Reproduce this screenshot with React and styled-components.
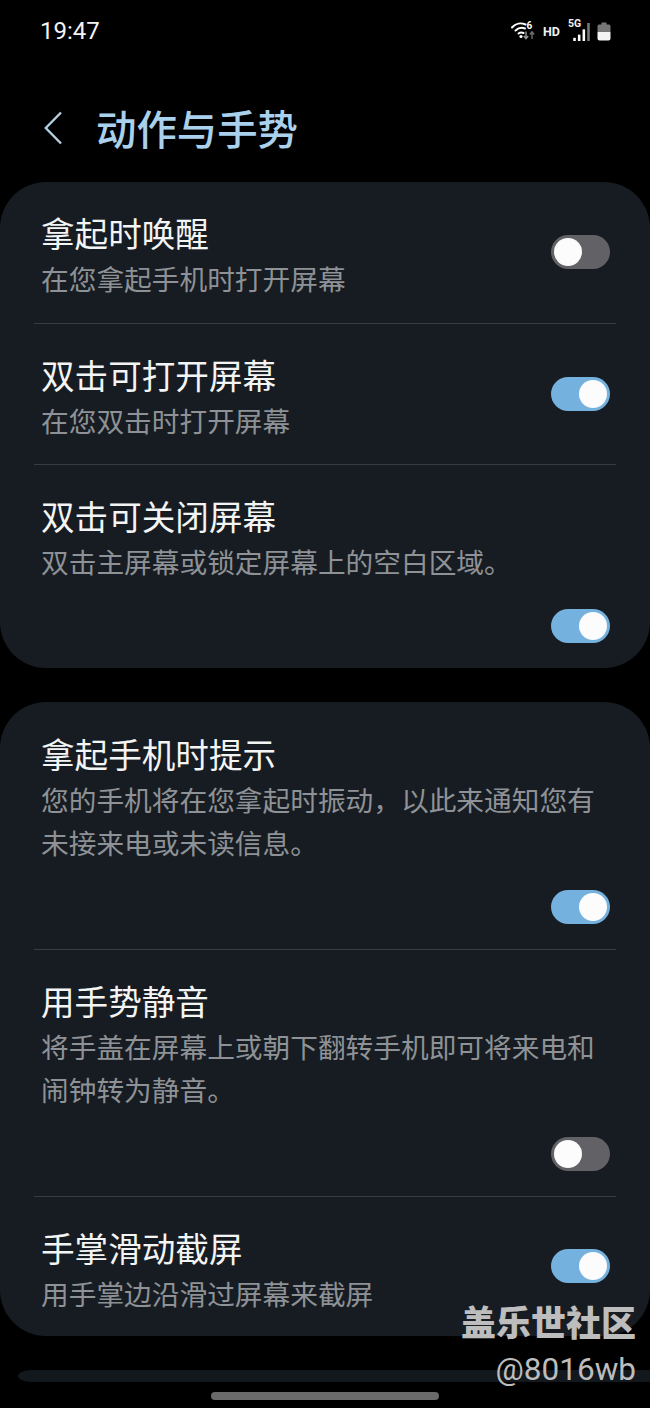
import React from "react";
import styled, { createGlobalStyle } from "styled-components";

const cjk = `"Noto Sans CJK SC", "Noto Sans", sans-serif`;

const GlobalStyle = createGlobalStyle`
	html, body {
		margin: 0;
		padding: 0;
		background: #000;
	}
	body {
		font-family: ${cjk};
	}
`;

const firstCard = [
	{ title: "拿起时唤醒", sub: ["在您拿起手机时打开屏幕"], on: false },
	{ title: "双击可打开屏幕", sub: ["在您双击时打开屏幕"], on: true },
	{ title: "双击可关闭屏幕", sub: ["双击主屏幕或锁定屏幕上的空白区域。"], on: true, stacked: true },
];

const secondCard = [
	{
		title: "拿起手机时提示",
		sub: ["您的手机将在您拿起时振动，以此来通知您有", "未接来电或未读信息。"],
		on: true,
		stacked: true,
	},
	{
		title: "用手势静音",
		sub: ["将手盖在屏幕上或朝下翻转手机即可将来电和", "闹钟转为静音。"],
		on: false,
		stacked: true,
	},
	{ title: "手掌滑动截屏", sub: ["用手掌边沿滑过屏幕来截屏"], on: true, last: true },
];

function StatusIcons() {
	return (
		<StatusRight>
			<svg width="24" height="22" viewBox="0 0 24 22">
				<g fill="none" stroke="#fff" strokeWidth="2" strokeLinecap="round">
					<path d="M1 7.5C4.5 3.5 10 2.5 14.5 4.5" />
					<path d="M4.5 10.5C7.5 7.8 11 7.3 14 8.5" />
					<path d="M7.5 13.5C9 12.3 11 12.2 12.5 13" />
				</g>
				<circle cx="10" cy="16.5" r="1.6" fill="#fff" />
				<text x="15.5" y="9" fontSize="10" fontWeight="700" fill="#fff" fontFamily="Roboto, sans-serif">6</text>
				<path d="M15 11.5v7M12.8 16l2.2 2.7 2.2-2.7" stroke="#9a9a9a" strokeWidth="1.4" fill="none" />
				<path d="M21 19v-7M18.8 14.5l2.2-2.7 2.2 2.7" stroke="#6e6e6e" strokeWidth="1.4" fill="none" />
			</svg>
			<HdLabel>HD</HdLabel>
			<SignalBox>
				<FiveG>5G</FiveG>
				<svg width="17" height="18" viewBox="0 0 15.6 17">
					<rect x="0" y="14" width="2.4" height="3" fill="#fff" />
					<rect x="4.4" y="11" width="2.4" height="6" fill="#fff" />
					<rect x="8.8" y="6" width="2.4" height="11" fill="#fff" />
					<rect x="13.2" y="0" width="2.4" height="17" fill="#7a7a7a" />
				</svg>
			</SignalBox>
			<svg width="14" height="19" viewBox="0 0 14 19">
				<path d="M4.5 0.5h5v2h2.5a1.5 1.5 0 0 1 1.5 1.5v6H.5V4A1.5 1.5 0 0 1 2 2.5h2.5z" fill="#777" />
				<path d="M.5 10h13v6.5a2 2 0 0 1-2 2h-9a2 2 0 0 1-2-2z" fill="#f4f4f4" />
			</svg>
		</StatusRight>
	);
}

function SettingRow({ title, sub, on, stacked, last }) {
	return (
		<Row stacked={stacked}>
			<RowText stacked={stacked} last={last}>
				<RowTitle>{title}</RowTitle>
				{sub.map((line) => (
					<RowSub key={line}>{line}</RowSub>
				))}
			</RowText>
			<Toggle on={on} stacked={stacked}>
				<Knob on={on} />
			</Toggle>
		</Row>
	);
}

function SettingCard({ items, offset }) {
	return (
		<Card offset={offset}>
			{items.map((item, i) => (
				<React.Fragment key={item.title}>
					{i > 0 && <Divider />}
					<SettingRow {...item} />
				</React.Fragment>
			))}
		</Card>
	);
}

export default function App() {
	return (
		<Page>
			<GlobalStyle />
			<StatusBar>
				<Clock>19:47</Clock>
				<StatusIcons />
			</StatusBar>
			<Header>
				<svg width="18" height="34" viewBox="0 0 18 34">
					<path d="M17 1.5 1.8 17 17 32.5" fill="none" stroke="#b4cfe2" strokeWidth="2.4" />
				</svg>
				<Heading>动作与手势</Heading>
			</Header>
			<SettingCard items={firstCard} />
			<SettingCard items={secondCard} offset={1} />
			<PeekCard />
			<HomeBar />
			<Watermark>
				<WatermarkName>盖乐世社区</WatermarkName>
				<WatermarkUser>@8016wb</WatermarkUser>
			</Watermark>
		</Page>
	);
}

const Page = styled.div`
	position: relative;
	width: 650px;
	height: 1408px;
	overflow: hidden;
	background: #000;
	color: #fff;
`;

const StatusBar = styled.div`
	display: flex;
	align-items: center;
	justify-content: space-between;
	height: 62px;
	padding: 0 39px 0 40px;
`;

const Clock = styled.div`
	font-family: Roboto, sans-serif;
	font-size: 24px;
	color: #f4f4f4;
`;

const StatusRight = styled.div`
	display: flex;
	align-items: center;
	gap: 8px;
`;

const HdLabel = styled.div`
	font-family: Roboto, sans-serif;
	font-size: 12.5px;
	font-weight: 700;
	color: #f0f0f0;
`;

const SignalBox = styled.div`
	position: relative;
	display: flex;
	margin-right: -1px;
	padding: 2px 0 0 5px;
`;

const FiveG = styled.div`
	position: absolute;
	top: -4px;
	left: 0;
	font-family: Roboto, sans-serif;
	font-size: 10.5px;
	font-weight: 700;
	color: #f0f0f0;
`;

const Header = styled.div`
	display: flex;
	align-items: center;
	gap: 34px;
	height: 120px;
	padding-left: 44px;
	padding-top: 12px;
	box-sizing: border-box;
`;

const Heading = styled.h1`
	margin: 0;
	font-size: 40.4px;
	font-weight: 500;
	line-height: 50px;
	color: #a9d0ec;
`;

const Card = styled.div`
	margin-bottom: 34px;
	padding-top: ${(props) => props.offset || 0}px;
	border-radius: 46px;
	background: #171c22;
`;

const Divider = styled.div`
	height: 1px;
	margin: 0 34px;
	background: #383d43;
`;

const Row = styled.div`
	display: flex;
	flex-direction: ${(props) => (props.stacked ? "column" : "row")};
	align-items: ${(props) => (props.stacked ? "flex-end" : "center")};
	justify-content: space-between;
	padding: ${(props) => (props.stacked ? "0 40px 25px 41px" : "0 40px 0 41px")};
`;

const RowText = styled.div`
	align-self: stretch;
	padding: 29px 0 ${(props) => (props.stacked ? "0" : props.last ? "20.5px" : "22.5px")};
`;

const RowTitle = styled.div`
	margin-bottom: 2px;
	font-size: 33.6px;
	line-height: 44px;
	color: #f3f4f4;
`;

const RowSub = styled.div`
	font-size: 27.7px;
	line-height: 43px;
	color: #8e9296;
	white-space: nowrap;
`;

const Toggle = styled.div`
	display: flex;
	align-items: center;
	flex: none;
	justify-content: ${(props) => (props.on ? "flex-end" : "flex-start")};
	box-sizing: border-box;
	width: 59px;
	height: 34px;
	margin-top: ${(props) => (props.stacked ? "26px" : "0")};
	padding: 0 3px;
	border-radius: 17px;
	background: ${(props) => (props.on ? "#75b1de" : "#626266")};
`;

const Knob = styled.div`
	width: 28px;
	height: 28px;
	border-radius: 50%;
	background: #fcfcfc;
`;

const PeekCard = styled.div`
	height: 12px;
	margin-left: 18px;
	border-radius: 14px 0 0 14px / 6px 0 0 6px;
	background: #12181d;
`;

const HomeBar = styled.div`
	width: 228px;
	height: 8px;
	margin: 10px auto 0;
	border-radius: 4px;
	background: #6a6a6a;
`;

const Watermark = styled.div`
	position: absolute;
	right: 14px;
	bottom: 13px;
	display: flex;
	flex-direction: column;
	align-items: flex-end;
	color: #bdbdbd;
`;

const WatermarkName = styled.div`
	margin-bottom: 2px;
	font-size: 35px;
	font-weight: 900;
	line-height: 44px;
`;

const WatermarkUser = styled.div`
	font-family: Roboto, sans-serif;
	font-size: 31.5px;
	line-height: 50px;
`;
